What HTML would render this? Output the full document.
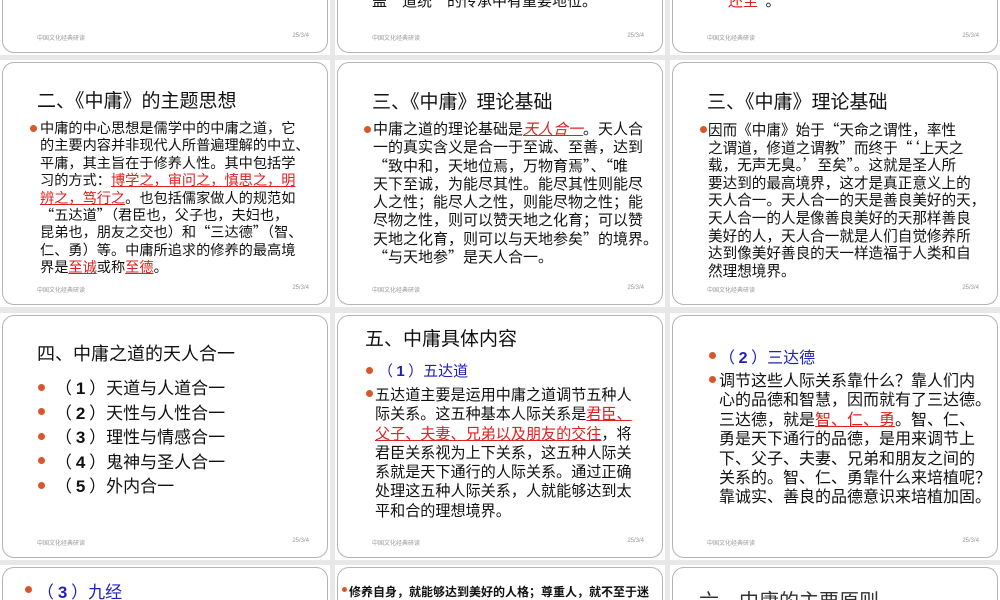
<!DOCTYPE html>
<html style="width:1000px;height:600px;overflow:hidden"><head><meta charset="utf-8"><style>
*{margin:0;padding:0;box-sizing:border-box}
body{width:1000px;height:600px;overflow:hidden;background:#e8e8e8;position:relative;font-family:"WenQuanYi Zen Hei","Noto Sans CJK SC",sans-serif;color:#111}
.t{position:absolute;width:330px;height:247px;background:#fff;overflow:hidden}
.t::before{content:"";position:absolute;left:2px;top:2px;right:2px;bottom:2px;border:1px solid #b4b4b4;border-radius:12px}
.t.s{height:35px}
.t.s::before{bottom:-40px}
.fl{position:absolute;left:37px;top:225px;font-size:6px;color:#999}
.fr{position:absolute;right:21px;top:225px;font-size:6px;color:#999;font-family:"Liberation Sans",sans-serif}
.ttl{position:absolute;font-size:19px;color:#111}
.b{position:absolute;width:7px;height:7px;border-radius:50%;background:#d9562a}
.r{color:#e02020;text-decoration:underline}
.bl{color:#2020c0}
p{position:absolute;white-space:nowrap}
b{font-family:"Liberation Sans",sans-serif;line-height:1}
</style></head><body>

<!-- row1 -->
<div class="t" style="left:0;top:-192px"><div class="fl">中国文化经典研读</div><div class="fr">25/3/4</div></div>
<div class="t" style="left:335px;top:-192px"><p style="left:37px;top:182px;font-size:15px">盖“道统”的传承中有重要地位。</p><div class="fl">中国文化经典研读</div><div class="fr">25/3/4</div></div>
<div class="t" style="left:670px;top:-192px"><p style="left:58px;top:182px;font-size:15px"><span style="color:#e02020">还至</span>”。</p><div class="fl">中国文化经典研读</div><div class="fr">25/3/4</div></div>

<!-- row2 -->
<div class="t" style="left:0;top:60px">
<div class="ttl" style="left:37px;top:26px">二、《中庸》的主题思想</div>
<div class="b" style="left:30px;top:65px"></div>
<p style="left:40px;top:60px;font-size:14.2px;line-height:17.4px">中庸的中心思想是儒学中的中庸之道，它<br>的主要内容并非现代人所普遍理解的中立、<br>平庸，其主旨在于修养人性。其中包括学<br>习的方式：<span class="r">博学之，审问之，慎思之，明</span><br><span class="r">辨之，笃行之</span>。也包括儒家做人的规范如<br>“五达道”（君臣也，父子也，夫妇也，<br>昆弟也，朋友之交也）和“三达德”（智、<br>仁、勇）等。中庸所追求的修养的最高境<br>界是<span class="r">至诚</span>或称<span class="r">至德</span>。</p>
<div class="fl">中国文化经典研读</div><div class="fr">25/3/4</div></div>

<div class="t" style="left:335px;top:60px">
<div class="ttl" style="left:37px;top:27px">三、《中庸》理论基础</div>
<div class="b" style="left:29px;top:66px"></div>
<p style="left:38px;top:60px;font-size:15px;line-height:18.3px">中庸之道的理论基础是<span class="r" style="font-style:italic">天人合一</span>。天人合<br>一的真实含义是合一于至诚、至善，达到<br>“致中和，天地位焉，万物育焉”、“唯<br>天下至诚，为能尽其性。能尽其性则能尽<br>人之性；能尽人之性，则能尽物之性；能<br>尽物之性，则可以赞天地之化育；可以赞<br>天地之化育，则可以与天地参矣”的境界。<br>“与天地参”是天人合一。</p>
<div class="fl">中国文化经典研读</div><div class="fr">25/3/4</div></div>

<div class="t" style="left:670px;top:60px">
<div class="ttl" style="left:37px;top:27px">三、《中庸》理论基础</div>
<div class="b" style="left:30px;top:66px"></div>
<p style="left:38px;top:61px;font-size:14.6px;line-height:17.6px">因而《中庸》始于“天命之谓性，率性<br>之谓道，修道之谓教”而终于“‘上天之<br>载，无声无臭。’至矣”。这就是圣人所<br>要达到的最高境界，这才是真正意义上的<br>天人合一。天人合一的天是善良美好的天，<br>天人合一的人是像善良美好的天那样善良<br>美好的人，天人合一就是人们自觉修养所<br>达到像美好善良的天一样造福于人类和自<br>然理想境界。</p>
<div class="fl">中国文化经典研读</div><div class="fr">25/3/4</div></div>

<!-- row3 -->
<div class="t" style="left:0;top:313px">
<div class="ttl" style="left:37px;top:27px;font-size:18px">四、中庸之道的天人合一</div>
<div class="b" style="left:38px;top:71px"></div>
<div class="b" style="left:38px;top:95px"></div>
<div class="b" style="left:38px;top:120px"></div>
<div class="b" style="left:38px;top:144px"></div>
<div class="b" style="left:38px;top:169px"></div>
<p style="left:55px;top:62px;font-size:17px;line-height:24.5px">（ <b>1</b> ）天道与人道合一<br>（ <b>2</b> ）天性与人性合一<br>（ <b>3</b> ）理性与情感合一<br>（ <b>4</b> ）鬼神与圣人合一<br>（ <b>5</b> ）外内合一</p>
<div class="fl">中国文化经典研读</div><div class="fr">25/3/4</div></div>

<div class="t" style="left:335px;top:313px">
<div class="ttl" style="left:30px;top:11px">五、中庸具体内容</div>
<div class="b" style="left:31px;top:54px"></div>
<p class="bl" style="left:43px;top:47px;font-size:15px">（ <b>1</b> ）五达道</p>
<div class="b" style="left:31px;top:77px"></div>
<p style="left:40px;top:72px;font-size:15.1px;line-height:19.3px">五达道主要是运用中庸之道调节五种人<br>际关系。这五种基本人际关系是<span class="r">君臣、</span><br><span class="r">父子、夫妻、兄弟以及朋友的交往</span>，将<br>君臣关系视为上下关系，这五种人际关<br>系就是天下通行的人际关系。通过正确<br>处理这五种人际关系，人就能够达到太<br>平和合的理想境界。</p>
<div class="fl">中国文化经典研读</div><div class="fr">25/3/4</div></div>

<div class="t" style="left:670px;top:313px">
<div class="b" style="left:39px;top:39px"></div>
<p class="bl" style="left:49px;top:31px;font-size:16px">（ <b>2</b> ）三达德</p>
<div class="b" style="left:39px;top:63px"></div>
<p style="left:49px;top:57px;font-size:16px;line-height:19.4px">调节这些人际关系靠什么？靠人们内<br>心的品德和智慧，因而就有了三达德。<br>三达德，就是<span class="r">智、仁、勇</span>。智、仁、<br>勇是天下通行的品德，是用来调节上<br>下、父子、夫妻、兄弟和朋友之间的<br>关系的。智、仁、勇靠什么来培植呢？<br>靠诚实、善良的品德意识来培植加固。</p>
<div class="fl">中国文化经典研读</div><div class="fr">25/3/4</div></div>

<!-- row4 -->
<div class="t s" style="left:0;top:565px">
<div class="b" style="left:25px;top:21px"></div>
<p class="bl" style="left:37px;top:13px;font-size:17px">（ <b>3</b> ）九经</p>
</div>
<div class="t s" style="left:335px;top:565px">
<div class="b" style="left:7px;top:22px;width:5px;height:5px"></div>
<p style="left:14px;top:18px;font-size:12px;font-weight:bold">修养自身，就能够达到美好的人格；尊重人，就不至于迷</p>
</div>
<div class="t s" style="left:670px;top:565px">
<p style="left:29px;top:20px;font-size:20px;color:#333">六、中庸的主要原则</p>
</div>
</body></html>
